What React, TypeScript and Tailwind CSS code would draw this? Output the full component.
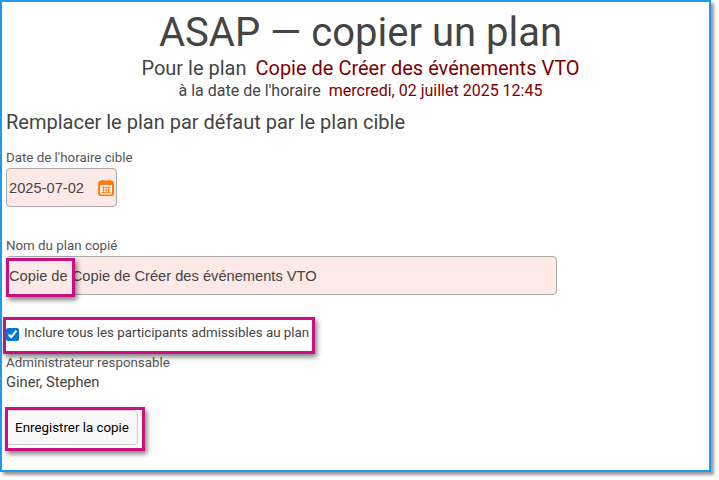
const callout = 'absolute border-[3px] border-[#c8117f] shadow-[2px_3px_5px_rgba(0,0,0,0.5)] pointer-events-none';

function CalendarIcon() {
  return (
    <svg width="16" height="16" viewBox="0 0 16 16" className="shrink-0">
      <rect x="1" y="1.5" width="14" height="14" rx="2.5" fill="#fff3e8" stroke="#ff7a0f" strokeWidth="2" />
      <rect x="1" y="1.5" width="14" height="3.5" fill="#ff7a0f" />
      <rect x="3.5" y="0" width="2" height="3" fill="#ff7a0f" />
      <rect x="10.5" y="0" width="2" height="3" fill="#ff7a0f" />
      <path d="M3.5 7.5h9M3.5 10h9M3.5 12.5h9M5.5 6.5v7M8 6.5v7M10.5 6.5v7" stroke="#ff7a0f" strokeWidth="0.8" fill="none" />
    </svg>
  );
}

export default function App() {
  return (
    <div className="w-[719px] h-[480px] bg-white font-['Roboto',sans-serif] text-[#444]">
      <div className="relative w-[711px] h-[472px] border-2 border-[#1e9af0] shadow-[3px_3px_3px_rgba(0,0,0,0.4)]">
        <div className="pl-[10px] flex flex-col items-center">
          <h1 className="text-[40px] leading-[48px] mt-[7px] whitespace-nowrap">ASAP — copier un plan</h1>
          <div className="text-[20px] leading-[24px] -mt-[1px] whitespace-nowrap">
            Pour le plan <span className="ml-[4px] text-[#800000]">Copie de Créer des événements VTO</span>
          </div>
          <div className="text-[16px] leading-[20px] mt-[1px] whitespace-nowrap">
            à la date de l'horaire <span className="ml-[4px] text-[#800000]">mercredi, 02 juillet 2025 12:45</span>
          </div>
        </div>

        <div className="pl-[4px]">
          <h2 className="text-[20px] leading-[24px] mt-[9px]">Remplacer le plan par défaut par le plan cible</h2>

          <label className="block text-[13.33px] leading-[16px] text-[#555] mt-[16px]">Date de l'horaire cible</label>
          <div className="w-[111px] h-[39px] mt-[2px] flex items-center justify-between px-[2px] bg-[#fde9e6] border border-[#aaa] rounded-[4px] font-['Liberation_Sans',sans-serif] text-[14.67px]">
            <span>2025-07-02</span>
            <CalendarIcon />
          </div>

          <label className="block text-[13.33px] leading-[16px] text-[#555] mt-[31px]">Nom du plan copié</label>
          <div className="w-[551px] h-[39px] mt-[2px] flex items-center pl-[2px] bg-[#fde9e6] border border-[#aaa] rounded-[4px] font-['Liberation_Sans',sans-serif] text-[14.67px]">
            Copie de Copie de Créer des événements VTO
          </div>

          <div className="flex items-start mt-[29px]">
            <input type="checkbox" defaultChecked className="w-[13px] h-[13px] mt-[4px] accent-[#0075d8]" />
            <span className="ml-[5px] mt-[1px] text-[13.33px] leading-[16px]">Inclure tous les participants admissibles au plan</span>
          </div>

          <div className="text-[13.33px] leading-[16px] text-[#555] mt-[14px]">Administrateur responsable</div>
          <div className="text-[14.67px] leading-[20px] mt-[1px]">Giner, Stephen</div>

          <button className="block mt-[18px] w-[132px] h-[35px] pt-[1px] bg-[#f8f8f8] border border-[#ccc] rounded-[4px] text-[13.33px] text-black">
            Enregistrer la copie
          </button>
        </div>

        <div className={`${callout} left-[4px] top-[256px] w-[69px] h-[39px]`} />
        <div className={`${callout} left-[1px] top-[315px] w-[312px] h-[37px]`} />
        <div className={`${callout} left-[3px] top-[405px] w-[140px] h-[44px]`} />
      </div>
    </div>
  );
}
